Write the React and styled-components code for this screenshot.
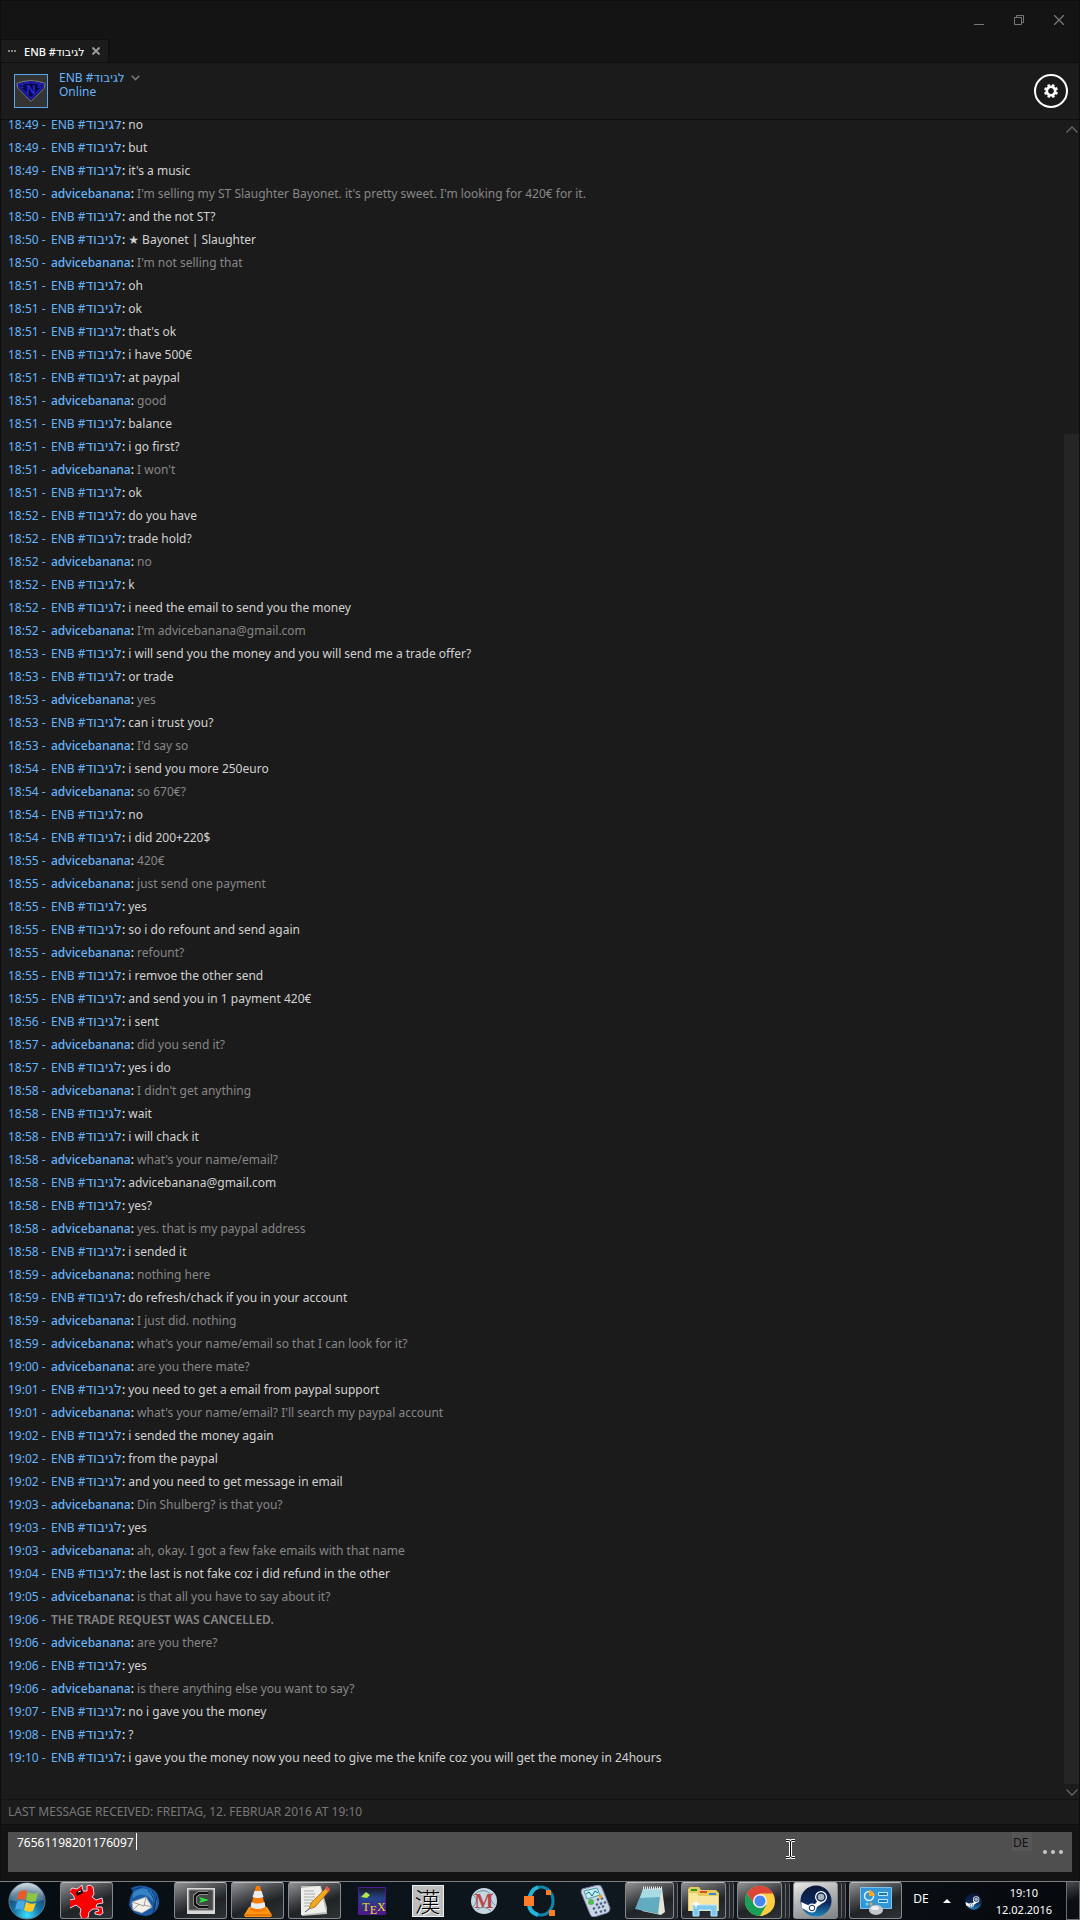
import styled, { createGlobalStyle, css } from 'styled-components';
import { useState } from 'react';

const FRIEND = 'friend';
const ME = 'advicebanana';

const messages = [
  ['18:49', FRIEND, 'no'],
  ['18:49', FRIEND, 'but'],
  ['18:49', FRIEND, "it's a music"],
  ['18:50', ME, "I'm selling my ST Slaughter Bayonet. it's pretty sweet. I'm looking for 420€ for it."],
  ['18:50', FRIEND, 'and the not ST?'],
  ['18:50', FRIEND, '★ Bayonet | Slaughter'],
  ['18:50', ME, "I'm not selling that"],
  ['18:51', FRIEND, 'oh'],
  ['18:51', FRIEND, 'ok'],
  ['18:51', FRIEND, "that's ok"],
  ['18:51', FRIEND, 'i have 500€'],
  ['18:51', FRIEND, 'at paypal'],
  ['18:51', ME, 'good'],
  ['18:51', FRIEND, 'balance'],
  ['18:51', FRIEND, 'i go first?'],
  ['18:51', ME, "I won't"],
  ['18:51', FRIEND, 'ok'],
  ['18:52', FRIEND, 'do you have'],
  ['18:52', FRIEND, 'trade hold?'],
  ['18:52', ME, 'no'],
  ['18:52', FRIEND, 'k'],
  ['18:52', FRIEND, 'i need the email to send you the money'],
  ['18:52', ME, "I'm advicebanana@gmail.com"],
  ['18:53', FRIEND, 'i will send you the money and you will send me a trade offer?'],
  ['18:53', FRIEND, 'or trade'],
  ['18:53', ME, 'yes'],
  ['18:53', FRIEND, 'can i trust you?'],
  ['18:53', ME, "I'd say so"],
  ['18:54', FRIEND, 'i send you more 250euro'],
  ['18:54', ME, 'so 670€?'],
  ['18:54', FRIEND, 'no'],
  ['18:54', FRIEND, 'i did 200+220$'],
  ['18:55', ME, '420€'],
  ['18:55', ME, 'just send one payment'],
  ['18:55', FRIEND, 'yes'],
  ['18:55', FRIEND, 'so i do refount and send again'],
  ['18:55', ME, 'refount?'],
  ['18:55', FRIEND, 'i remvoe the other send'],
  ['18:55', FRIEND, 'and send you in 1 payment 420€'],
  ['18:56', FRIEND, 'i sent'],
  ['18:57', ME, 'did you send it?'],
  ['18:57', FRIEND, 'yes i do'],
  ['18:58', ME, "I didn't get anything"],
  ['18:58', FRIEND, 'wait'],
  ['18:58', FRIEND, 'i will chack it'],
  ['18:58', ME, "what's your name/email?"],
  ['18:58', FRIEND, 'advicebanana@gmail.com'],
  ['18:58', FRIEND, 'yes?'],
  ['18:58', ME, 'yes. that is my paypal address'],
  ['18:58', FRIEND, 'i sended it'],
  ['18:59', ME, 'nothing here'],
  ['18:59', FRIEND, 'do refresh/chack if you in your account'],
  ['18:59', ME, 'I just did. nothing'],
  ['18:59', ME, "what's your name/email so that I can look for it?"],
  ['19:00', ME, 'are you there mate?'],
  ['19:01', FRIEND, 'you need to get a email from paypal support'],
  ['19:01', ME, "what's your name/email? I'll search my paypal account"],
  ['19:02', FRIEND, 'i sended the money again'],
  ['19:02', FRIEND, 'from the paypal'],
  ['19:02', FRIEND, 'and you need to get message in email'],
  ['19:03', ME, 'Din Shulberg? is that you?'],
  ['19:03', FRIEND, 'yes'],
  ['19:03', ME, 'ah, okay. I got a few fake emails with that name'],
  ['19:04', FRIEND, 'the last is not fake coz i did refund in the other'],
  ['19:05', ME, 'is that all you have to say about it?'],
  ['19:06', null, 'THE TRADE REQUEST WAS CANCELLED.'],
  ['19:06', ME, 'are you there?'],
  ['19:06', FRIEND, 'yes'],
  ['19:06', ME, 'is there anything else you want to say?'],
  ['19:07', FRIEND, 'no i gave you the money'],
  ['19:08', FRIEND, '?'],
  ['19:10', FRIEND, 'i gave you the money now you need to give me the knife coz you will get the money in 24hours'],
];

export default function App() {
  const [draft, setDraft] = useState('76561198201176097');

  return (
    <Screen>
      <GlobalStyle />
      <ChatWindow>
        <TitleBar>
          <WindowButtons>
            <PlainButton aria-label="Minimize">
              <svg width="10" height="10" stroke="#777">
                <path d="M0 9.5h10" />
              </svg>
            </PlainButton>
            <PlainButton aria-label="Restore">
              <svg width="10" height="10" fill="none" stroke="#777">
                <path d="M.5 2.5h7v7h-7zM2.5 2V.5h7v7H8" />
              </svg>
            </PlainButton>
            <PlainButton aria-label="Close">
              <svg width="10" height="10" stroke="#777" strokeWidth="1.3">
                <path d="M0 0l10 10M10 0L0 10" />
              </svg>
            </PlainButton>
          </WindowButtons>
          <Tab>
            <svg width="8" height="2" fill="#888">
              <path d="M0 0h2v2H0zM3 0h2v2H3zM6 0h2v2H6z" />
            </svg>
            <TabName>
              ENB #<bdi>לגיבוד</bdi>
            </TabName>
            <PlainButton aria-label="Close tab">
              <svg width="8" height="8" stroke="#999" strokeWidth="2">
                <path d="M.5.5l7 7M7.5.5l-7 7" />
              </svg>
            </PlainButton>
          </Tab>
        </TitleBar>

        <Header>
          <Avatar />
          <Friend>
            <FriendName>
              <span>
                ENB #<bdi>לגיבוד</bdi>
              </span>
              <svg width="9" height="6" fill="none" stroke="#777" strokeWidth="1.6">
                <path d="M.7.7l3.8 3.8L8.3.7" />
              </svg>
            </FriendName>
            <span>Online</span>
          </Friend>
          <GearButton aria-label="Settings">
            <svg width="14" height="14" viewBox="-7 -7 14 14">
              <circle r="4.2" fill="none" stroke="#fff" strokeWidth="2.6" />
              {[22, 67, 112, 157, 202, 247, 292, 337].map((a) => (
                <path key={a} d="M-1.3-7h2.6v2.5h-2.6z" fill="#fff" transform={`rotate(${a})`} />
              ))}
            </svg>
          </GearButton>
        </Header>

        <LogPane>
          <Log>
            {messages.map(([time, who, text], i) => (
              <Message key={i}>
                <Stamp>
                  <time>{time}</time> -
                </Stamp>
                {who === FRIEND && (
                  <span>
                    ENB #<Hebrew>לגיבוד</Hebrew>
                  </span>
                )}
                {who === ME && <MyName>{ME}</MyName>}
                {who ? (
                  <>
                    <Colon>:</Colon> <Body $me={who === ME}>{text}</Body>
                  </>
                ) : (
                  <Notice>{text}</Notice>
                )}
              </Message>
            ))}
          </Log>
          <Scrollbar>
            <PlainButton aria-label="Scroll up">
              <svg width="12" height="7" fill="none" stroke="#666" strokeWidth="1.3">
                <path d="M.5 6.5L6 1l5.5 5.5" />
              </svg>
            </PlainButton>
            <Track>
              <Thumb />
            </Track>
            <PlainButton aria-label="Scroll down">
              <svg width="12" height="7" fill="none" stroke="#666" strokeWidth="1.3">
                <path d="M.5.5L6 6 11.5.5" />
              </svg>
            </PlainButton>
          </Scrollbar>
        </LogPane>

        <LastMessage>LAST MESSAGE RECEIVED: FREITAG, 12. FEBRUAR 2016 AT 19:10</LastMessage>

        <Composer>
          <Draft aria-label="Message" value={draft} onChange={(e) => setDraft(e.target.value)} />
          <Caret />
          <Pointer width="11" height="20" viewBox="0 0 11 20">
            <path
              d="M1 1.5h3l1.5 1 1.5-1h3M5.5 2.5v15M1 18.5h3l1.5-1 1.5 1h3"
              fill="none"
              stroke="#fff"
              strokeWidth="3"
            />
            <path
              d="M1 1.5h3l1.5 1 1.5-1h3M5.5 2.5v15M1 18.5h3l1.5-1 1.5 1h3"
              fill="none"
              stroke="#000"
            />
          </Pointer>
          <Language>DE</Language>
          <MoreButton aria-label="More">
            <svg width="20" height="4" fill="#c8c8c8">
              <circle cx="2" cy="2" r="2" />
              <circle cx="10" cy="2" r="2" />
              <circle cx="18" cy="2" r="2" />
            </svg>
          </MoreButton>
        </Composer>
      </ChatWindow>
      <Taskbar />
    </Screen>
  );
}

const Avatar = () => (
  <AvatarFrame viewBox="0 0 34 34" role="img" aria-label="Avatar">
    <path d="M0 0h34v34H0z" fill="#343434" />
    <path d="M2 9Q17 3 32 9l-1 5-14 14L3 14z" fill="#08083a" stroke="#8a8a8a" />
    <path d="M4 10q13-4 26 0l-1 3-12 12L5 13z" fill="none" stroke="#1c1cb4" strokeWidth="2" />
    <text x="17" y="20" textAnchor="middle" fontSize="13" fontWeight="700" fill="#2525d5">
      N
    </text>
    <text x="8" y="14" textAnchor="middle" fontSize="6" fontWeight="700" fill="#2525c5">
      E
    </text>
    <text x="26" y="14" textAnchor="middle" fontSize="6" fontWeight="700" fill="#2525c5">
      B
    </text>
  </AvatarFrame>
);

const Taskbar = () => (
  <Bar>
    <StartButton aria-label="Start">
      <StartOrb />
    </StartButton>
    <TaskGroup $gap={4}>
      <Task $open aria-label="Image viewer"><RedSplat /></Task>
      <Task aria-label="Thunderbird"><Thunderbird /></Task>
      <Task $open aria-label="Terminal"><Terminal /></Task>
      <Task $open aria-label="VLC"><Cone /></Task>
      <Task $open aria-label="Editor"><Editor /></Task>
    </TaskGroup>
    <TaskGroup $gap={3}>
      <Task aria-label="TeX"><Tex /></Task>
      <Task aria-label="Kanji"><KanjiTile>漢</KanjiTile></Task>
      <Task aria-label="Mathematics"><MathIcon /></Task>
      <Task aria-label="Octave"><Ring /></Task>
      <Task aria-label="Calculator"><Calculator /></Task>
      <Stack><Task $open aria-label="Notepad"><Notepad /></Task><Edge /></Stack>
      <Stack><Task $open aria-label="Explorer"><Explorer /></Task><Edge /><Edge /></Stack>
      <Stack><Task $open aria-label="Chrome"><Chrome /></Task><Edge /><Edge /></Stack>
      <Stack><Task $open $active aria-label="Steam"><Steam size={32} /></Task><Edge /><Edge /></Stack>
      <Task $open aria-label="Control Panel"><ControlPanel /></Task>
    </TaskGroup>
    <Tray>
      <TrayLanguage>DE</TrayLanguage>
      <PlainButton aria-label="Show hidden icons">
        <svg width="8" height="4" fill="#fff">
          <path d="M4 0l4 4H0z" />
        </svg>
      </PlainButton>
      <Steam size={17} />
      <Clock>
        <time>19:10</time>
        <span>12.02.2016</span>
      </Clock>
      <ShowDesktop aria-label="Show desktop" />
    </Tray>
  </Bar>
);

const StartOrb = () => (
  <svg width="38" height="38" viewBox="0 0 38 38">
    <defs>
      <radialGradient id="orb" cx=".5" cy=".9" r=".9">
        <stop offset="0" stopColor="#3fe0ff" />
        <stop offset=".4" stopColor="#1478ad" />
        <stop offset=".75" stopColor="#17456b" />
        <stop offset="1" stopColor="#7f9db2" />
      </radialGradient>
      <linearGradient id="gloss" x2="0" y2="1">
        <stop offset="0" stopColor="#fff" stopOpacity=".65" />
        <stop offset="1" stopColor="#fff" stopOpacity=".15" />
      </linearGradient>
    </defs>
    <circle cx="19" cy="19" r="18" fill="url(#orb)" stroke="#5e8297" />
    <path d="M2 18a17 17 0 0 1 34 0q-17 5-34 0z" fill="url(#gloss)" />
    <path d="M11 10q4-3 8-1l-2 9q-4-2-8 0z" fill="#ee5a24" />
    <path d="M20 10q5 3 10 0l-2 9q-5 2-10-1z" fill="#8dc63f" />
    <path d="M9 20q4-3 8 0l-2 8q-4-2-8 0z" fill="#4aa8e8" />
    <path d="M18 20q5 3 10 1l-3 8q-5 2-9-1z" fill="#ffca28" />
  </svg>
);

const RedSplat = () => (
  <svg width="34" height="34" viewBox="0 0 34 34">
    <path
      d="M2 4l5 1 5-4 1 6h4V2l3-1 3 2 1 7-2 3 4 3 6-2 1 5-6 1-1 3h6l1 6-3 2-5-1v-2l4-1-1-2h-5l-4 3-1 6-6 1-2-5 1-5-5-4-6 3-3-4 2-4 6-1-2-4-4-3z"
      fill="#f80000"
      stroke="#e9d4e8"
    />
    <path d="M6 8l6-3 1 4-6 3z" fill="#140000" />
    <path d="M8 8l3-1" stroke="#fff" />
  </svg>
);

const Thunderbird = () => (
  <svg width="32" height="32" viewBox="0 0 32 32">
    <path d="M3 3q10-5 20 0 9 5 8 16-2 10-13 12Q5 31 1 20q1-10 4-13z" fill="#1c5ca6" />
    <path d="M5 8q9-8 18-2 8 8 5 18-2-9-9-13-7-4-14 2z" fill="#3583c4" />
    <path d="M24 6q6 9 2 20M20 5q8 8 6 18M4 5l10-3M29 11l-4 17" stroke="#0d397a" fill="none" />
    <path d="M4 17l14-5 6 10-10 6-9-3z" fill="#f2f0eb" stroke="#b4b0aa" strokeWidth=".6" />
    <path d="M4 17l12 4 2-9M5 25l6-6M24 22l-8-2" fill="none" stroke="#918b82" strokeWidth=".8" />
  </svg>
);

const Terminal = () => (
  <svg width="28" height="28" viewBox="0 0 28 28">
    <path d="M0 1h28v26H0z" fill="#d8d8d8" />
    <path d="M2 3h24v20H2z" fill="#454745" stroke="#777" />
    <path d="M21 6h-9L8 9v8l4 3h9" fill="none" stroke="#b0b0b0" strokeWidth="4" />
    <path d="M21 6h-9L8 9v8l4 3h9" fill="none" stroke="#111" strokeWidth="2.5" />
    <path d="M12 10l10 3-10 3 2-3z" fill="#24e640" />
  </svg>
);

const Cone = () => (
  <svg width="28" height="32" viewBox="0 0 28 32">
    <path d="M5 22h18l5 8-1 2H1l-1-2z" fill="#ff9412" />
    <path d="M12 1h4l6 24q-8 4-16 0z" fill="#f57c00" />
    <path d="M10.5 6h7l2 6q-5 2-11 0zM7.5 17q6 3 13 0l1 5q-7 4-15 0z" fill="#e9edf0" />
    <path d="M1 30h26" stroke="#c95c00" />
  </svg>
);

const Editor = () => (
  <svg width="32" height="32" viewBox="0 0 32 32">
    <path d="M2 1h20l6 22v6L3 31z" fill="#bcbdb9" />
    <path d="M2 3l19-2 6 26-25 3z" fill="#eeeeea" />
    <path d="M5 6h10M5 9h11M5 12h11M5 15h9M5 18h8M5 21h5" stroke="#aaa" strokeWidth="1.2" />
    <path d="M28 2l3 3-15 17-6 2 2-6z" fill="#f3a71b" stroke="#90581b" strokeWidth=".7" />
    <path d="M26 3l2-2 3 3-2 3z" fill="#e45b57" />
    <path d="M10 24l-4 3" stroke="#555" />
  </svg>
);

const Tex = () => (
  <svg width="28" height="28" viewBox="0 0 28 28">
    <defs>
      <linearGradient id="tex" x2="0" y2="1">
        <stop offset="0" stopColor="#16151c" />
        <stop offset=".4" stopColor="#24458a" />
        <stop offset="1" stopColor="#4e168b" />
      </linearGradient>
    </defs>
    <path d="M.5.5h27v27H.5z" fill="url(#tex)" stroke="#4b1c8f" />
    <path d="M3 10l5-5 4 3-3 3z" fill="#b6e44a" />
    <text x="16" y="24" textAnchor="middle" fontFamily="Liberation Serif, serif" fontSize="12" fill="#f1dc28">
      T<tspan dy="3">E</tspan><tspan dy="-3">X</tspan>
    </text>
  </svg>
);

const MathIcon = () => (
  <svg width="28" height="28" viewBox="0 0 28 28">
    <circle cx="14" cy="14" r="13" fill="#c4d6df" />
    <path d="M4 8q9-9 18 0M3 20q7-8 0-12M25 18q-8-6-2-12M7 23q6-6 14 1" fill="none" stroke="#71929f" />
    <text
      x="14"
      y="21"
      textAnchor="middle"
      fontFamily="Liberation Serif, serif"
      fontSize="20"
      fontWeight="700"
      fill="#bd4548"
    >
      M
    </text>
  </svg>
);

const Ring = () => (
  <svg width="32" height="32" viewBox="0 0 32 32">
    <ellipse cx="17" cy="16" rx="12" ry="14" fill="none" stroke="#0e85ad" strokeWidth="3" />
    <path d="M14 2Q6 5 5 16t9 14" fill="none" stroke="#23b4d8" strokeWidth="4" />
    <path d="M0 11h10v10H0zM22 5h5v5h-5zM25 25h6v6h-6z" fill="#ff7d26" />
  </svg>
);

const Calculator = () => (
  <svg width="32" height="32" viewBox="0 0 32 32">
    <path d="M2 4l16-4q3 0 4 3l8 20q0 4-3 5l-13 4q-3 0-4-3L1 7z" fill="#cbd5e8" stroke="#73839e" />
    <path d="M4 6l13-3 3 7-13 4z" fill="#c6f1f4" stroke="#4b9caa" />
    <path d="M6 9l3-2 3 4 3-5 3 2" fill="none" stroke="#1a6872" />
    <circle cx="11" cy="17" r="3" fill="#54b94e" />
    <path
      d="M17 15l2-1M21 14l2-1M16 20l2-1M20 19l2-1M24 18l2-1M13 24l2-1M18 23l2-1M22 22l2-1M15 28l2-1M20 27l2-1M24 26l2-1"
      stroke="#4b5d7d"
      strokeWidth="2.5"
    />
    <path d="M19 12l3-1" stroke="#f2a41b" strokeWidth="3" />
  </svg>
);

const Notepad = () => (
  <svg width="30" height="30" viewBox="0 0 30 30">
    <path d="M9 3l18-1 3 24-4 3L7 25z" fill="#e3e4d5" />
    <path d="M8 3h18l-3 25L0 23z" fill="#62abc0" />
    <path d="M8 3h18l-1 8L5 12z" fill="#a9dbe5" />
    <path d="M8 2h19" stroke="#e2e6e7" strokeWidth="3" strokeDasharray="1 1" />
  </svg>
);

const Explorer = () => (
  <svg width="33" height="32" viewBox="0 0 33 32">
    <path d="M1 4l2-2h9l2 3h15l3 3v18H1z" fill="#e7c95d" />
    <path d="M4 4h6v2H4z" fill="#219b2a" />
    <path d="M13 6h7v2h-7z" fill="#db4b2a" />
    <path d="M22 8h7v2h-7z" fill="#3489cf" />
    <path d="M2 8h8l2 3h19v15H2z" fill="#f8e5a0" />
    <path d="M6 20h24v11h-6v-6H12v6H6z" fill="#7ec9ed" stroke="#b7ebff" />
    <path d="M9 15l1 3 4 1-4 1-1 4-1-4-4-1 4-1z" fill="#fff" />
  </svg>
);

const Chrome = () => (
  <svg width="30" height="30" viewBox="0 0 30 30">
    <circle cx="15" cy="15" r="15" fill="#ffcd41" />
    <path d="M2 7.5A15 15 0 0 1 28 7.5H15L9 18z" fill="#db4437" />
    <path d="M2 7.5A15 15 0 0 0 15 30l6.5-11.3L9 18z" fill="#199f58" />
    <circle cx="15" cy="15" r="7" fill="#f3f3f3" />
    <circle cx="15" cy="15" r="5.5" fill="#4688f1" />
  </svg>
);

const Steam = ({ size }) => (
  <svg width={size} height={size} viewBox="0 0 32 32">
    <defs>
      <linearGradient id="steam" x2="0" y2="1">
        <stop offset="0" stopColor="#0a1738" />
        <stop offset=".55" stopColor="#0c2859" />
        <stop offset="1" stopColor="#1f84bb" />
      </linearGradient>
    </defs>
    <circle cx="16" cy="16" r="15.5" fill="url(#steam)" />
    <path d="M1 17l9 4 5-2 6-7 3 5-7 5-3 4-5 1-7-4z" fill="#fff" />
    <circle cx="21" cy="12" r="6" fill="#fff" />
    <circle cx="21" cy="12" r="4" fill="#a8b3be" stroke="#102850" strokeWidth="1.5" />
    <circle cx="12" cy="23" r="4.5" fill="#fff" />
    <circle cx="12" cy="23" r="2.8" fill="none" stroke="#12335e" />
  </svg>
);

const ControlPanel = () => (
  <svg width="32" height="28" viewBox="0 0 32 28">
    <path d="M.5.5h31v21H.5z" fill="#3596d5" stroke="#7cc4ef" />
    <circle cx="9" cy="9" r="4.5" fill="none" stroke="#d9f3ff" strokeWidth="1.5" />
    <path d="M9 9V3q5 1 6 6z" fill="#ffa523" />
    <path d="M18.5 5.5h9v3h-9zM18.5 12.5h9v3h-9z" fill="#147bbc" stroke="#bdeaff" />
    <circle cx="7" cy="17" r="1.5" fill="#63d9ff" />
    <circle cx="11" cy="17" r="1.5" fill="#ff9d2f" />
    <ellipse cx="16" cy="23" rx="7" ry="5" fill="#c4c7c9" />
    <ellipse cx="15" cy="21" rx="4" ry="2" fill="#f1f1f1" />
  </svg>
);

const GlobalStyle = createGlobalStyle`
  * {
    box-sizing: border-box;
  }

  body {
    margin: 0;
    background: #141414;
    font-family: 'Noto Sans', 'DejaVu Sans', sans-serif;
    font-size: 12px;
  }

  svg {
    display: block;
    flex-shrink: 0;
  }
`;

const Screen = styled.div`
  display: flex;
  flex-direction: column;
  height: 100vh;
`;

const ChatWindow = styled.main`
  display: flex;
  flex-direction: column;
  flex: 1;
  min-height: 0;
  background: #1b1b1b;
  border: 1px solid #0e0e0e;
  border-bottom: none;
`;

const PlainButton = styled.button`
  display: flex;
  align-items: center;
  justify-content: center;
  padding: 0;
  border: none;
  background: none;
  cursor: pointer;
`;

const TitleBar = styled.div`
  display: flex;
  flex-direction: column;
  background: #141414;
  border-bottom: 1px solid #0e0e0e;
`;

const WindowButtons = styled.div`
  display: flex;
  justify-content: flex-end;
  gap: 30px;
  height: 38px;
  padding: 0 15px 0 0;
`;

const Tab = styled.div`
  display: flex;
  align-items: center;
  align-self: flex-start;
  gap: 8px;
  height: 23px;
  padding: 0 8px 0 7px;
  background: #1b1b1b;
  border-top: 1px solid #0e0e0e;
  border-right: 1px solid #0e0e0e;
`;

const TabName = styled.span`
  color: #fff;
  font-size: 11px;
  font-weight: 500;
`;

const Header = styled.header`
  display: flex;
  align-items: flex-start;
  gap: 11px;
  height: 57px;
  padding: 11px 11px 0 13px;
  border-bottom: 1px solid #0e0e0e;
`;

const AvatarFrame = styled.svg`
  width: 34px;
  height: 34px;
  border: 1px solid #57a6ed;
`;

const Friend = styled.div`
  display: flex;
  flex: 1;
  flex-direction: column;
  margin-top: -3px;
  color: #66b4fa;
  line-height: 14px;
`;

const FriendName = styled.span`
  display: flex;
  align-items: center;
  gap: 6px;
`;

const GearButton = styled(PlainButton)`
  width: 34px;
  height: 34px;
  border: 2px solid #fff;
  border-radius: 50%;
`;

const LogPane = styled.section`
  display: flex;
  flex: 1;
  min-height: 0;
`;

/* the log sticks to its newest line, older ones run out at the top */
const Log = styled.ol`
  display: flex;
  flex: 1;
  flex-direction: column;
  justify-content: flex-end;
  margin: 0;
  padding: 0 0 30px 7px;
  overflow: hidden;
  list-style: none;
`;

const Message = styled.li`
  flex-shrink: 0;
  height: 23px;
  line-height: 23px;
  color: #66b4fa;
  white-space: nowrap;
`;

const Stamp = styled.span`
  display: inline-block;
  width: 43px;
`;

const Hebrew = styled.bdi`
  font-size: 14px;
  line-height: 1;
`;

const MyName = styled.span`
  font-weight: 500;
`;

const Colon = styled.span`
  color: #fff;
`;

const Body = styled.span`
  color: ${({ $me }) => ($me ? '#878787' : '#d2d2d2')};
`;

const Notice = styled.span`
  color: #858585;
  font-weight: 600;
`;

const Scrollbar = styled.div`
  display: flex;
  flex-direction: column;
  gap: 5px;
  width: 15px;
  padding: 6px 0 3px;
`;

const Track = styled.div`
  display: flex;
  flex: 1;
  flex-direction: column;
  justify-content: flex-end;
`;

const Thumb = styled.div`
  height: 82%;
  background: #252525;
`;

const LastMessage = styled.p`
  margin: 0;
  padding: 0 7px;
  border-top: 1px solid #131313;
  border-bottom: 1px solid #0e0e0e;
  color: #777;
  line-height: 24px;
`;

const Composer = styled.div`
  position: relative;
  display: flex;
  padding: 7px;
  height: 56px;
  background: #141414;
`;

const Draft = styled.textarea`
  flex: 1;
  height: 40px;
  padding: 2px 80px 0 9px;
  border: none;
  outline: none;
  resize: none;
  background: #4f4f4f;
  color: #fff;
  font: inherit;
  line-height: 17px;
`;

const Caret = styled.span`
  position: absolute;
  top: 8px;
  left: 135px;
  width: 1px;
  height: 17px;
  background: #fff;
`;

const Pointer = styled.svg`
  position: absolute;
  top: 14px;
  right: 283px;
`;

const Language = styled.span`
  position: absolute;
  top: 7px;
  right: 47px;
  width: 20px;
  height: 19px;
  padding-left: 1px;
  background: #565656;
  color: #111;
  line-height: 21px;
`;

const MoreButton = styled(PlainButton)`
  position: absolute;
  top: 20px;
  right: 16px;
  height: 14px;
`;

const Bar = styled.footer`
  display: flex;
  height: 39px;
  background: linear-gradient(100deg, #060d12, #101820 60%, #05080c);
  border-top: 1px solid #7b7d80;
`;

const StartButton = styled(PlainButton)`
  width: 60px;
  padding-right: 6px;
`;

const TaskGroup = styled.div`
  display: flex;
  gap: ${({ $gap }) => $gap}px;

  & + & {
    margin-left: 4px;
  }
`;

const openTask = css`
  border: 1px solid #85878a;
  border-top-color: #b9babb;
  border-radius: 3px;
  background: ${({ $active }) =>
    $active
      ? 'linear-gradient(160deg, #e8e8e8, #b2b3b4 45%, #808284)'
      : 'linear-gradient(160deg, #909294, #4b4d50 35%, #202427 60%, #2d3235)'};
`;

const Task = styled(PlainButton)`
  width: 53px;
  height: 37px;
  ${({ $open }) => $open && openTask}
`;

const Stack = styled.div`
  display: flex;
  width: 53px;

  ${Task} {
    flex: 1;
    width: auto;
  }
`;

const Edge = styled.span`
  width: 4px;
  height: 37px;
  border-right: 1px solid #65676a;
  border-radius: 0 3px 3px 0;
  background: #25282b;
`;

const KanjiTile = styled.span`
  width: 32px;
  height: 32px;
  border: 1px solid #eee;
  background: #bcbcbc;
  color: #000;
  font-family: 'Noto Sans CJK JP', sans-serif;
  font-size: 26px;
  font-weight: 300;
  line-height: 30px;
  text-shadow: 1px 1px #fff;
`;

const Tray = styled.div`
  display: flex;
  flex: 1;
  align-items: center;
  justify-content: flex-end;
  gap: 14px;
  color: #fff;
`;

const TrayLanguage = styled.span`
  margin-bottom: 6px;
`;

const Clock = styled.div`
  display: flex;
  flex-direction: column;
  align-items: center;
  font-size: 11px;
  line-height: 17px;
`;

const ShowDesktop = styled.button`
  align-self: stretch;
  width: 14px;
  padding: 0;
  border: 1px solid #6c6e70;
  border-top: none;
  background: linear-gradient(160deg, #4a4d50, #0b0e11 50%);
`;
